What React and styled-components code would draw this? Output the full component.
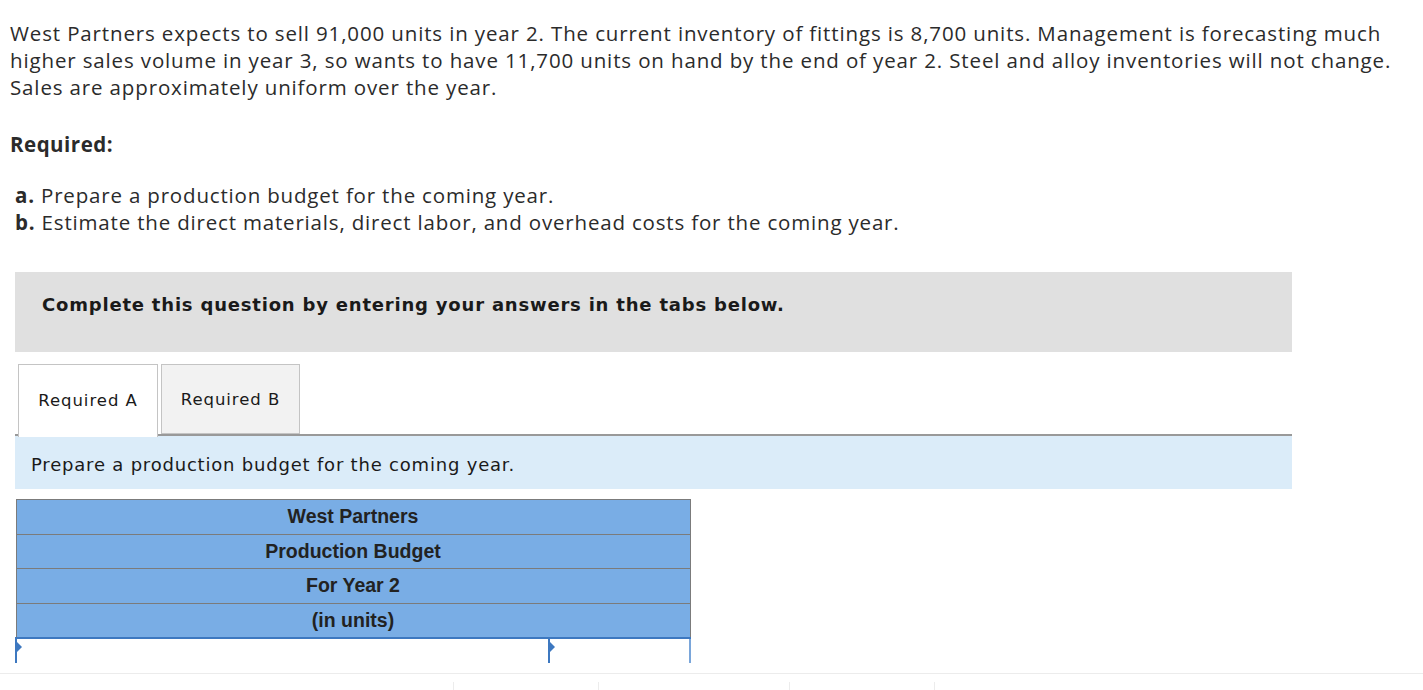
import React from 'react';
import styled, { createGlobalStyle } from 'styled-components';

const GlobalStyle = createGlobalStyle`
  html, body {
    margin: 0;
    padding: 0;
    background: #fff;
    overflow: hidden;
  }
`;

const Page = styled.div`
  padding: 20px 0 0 10px;
  width: 1413px;
  height: 690px;
  box-sizing: border-box;
  font-family: "Open Sans", Lato, sans-serif;
  color: #2b2b2b;
`;

const Intro = styled.p`
  margin: 0;
  font-size: 20.5px;
  line-height: 27px;
  white-space: nowrap;
  letter-spacing: 0.86px;
`;

const Line = styled.span`
  display: block;
`;

const Heading = styled.h3`
  margin: 30px 0 0;
  font-size: 20.5px;
  font-weight: 700;
  line-height: 27px;
  letter-spacing: 0.5px;
`;

const Tasks = styled.ol`
  list-style: none;
  margin: 24px 0 0;
  padding: 0 0 0 5px;
  font-size: 20.5px;
  line-height: 27px;
  letter-spacing: 0.82px;
  white-space: nowrap;
`;

const Letter = styled.b`
  font-weight: 700;
`;

const Work = styled.div`
  margin: 36px 0 0 5px;
  width: 1277px;
  font-family: "DejaVu Sans", Verdana, sans-serif;
  color: #1a1a1a;
`;

const Notice = styled.div`
  height: 80px;
  box-sizing: border-box;
  background: #e0e0e0;
  padding: 21px 0 0 27px;
  font-size: 18px;
  line-height: 24px;
  font-weight: 700;
  letter-spacing: 0.8px;
`;

const TabRow = styled.div`
  margin-top: 12px;
  display: flex;
  align-items: flex-start;
  gap: 3px;
  padding-left: 3px;
  border-bottom: 2px solid #999;
  height: 70px;
`;

const Tab = styled.button`
  width: ${p => p.$w}px;
  height: 70px;
  margin: 0 0 ${p => (p.$active ? -2 : 0)}px;
  padding: ${p => (p.$active ? '0 0 2px' : '0')};
  box-sizing: ${p => (p.$active ? 'content-box' : 'border-box')};
  border: 1px solid #c4c4c4;
  border-bottom: ${p => (p.$active ? 'none' : '1px solid #c4c4c4')};
  background: ${p => (p.$active ? '#fff' : '#f2f2f2')};
  font-family: "DejaVu Sans", Verdana, sans-serif;
  font-size: 16.5px;
  letter-spacing: 0.95px;
  color: #1a1a1a;
  position: relative;
  z-index: 1;
  cursor: pointer;
`;

const Instruction = styled.div`
  height: 53px;
  box-sizing: border-box;
  background: #dbecf9;
  display: flex;
  align-items: center;
  padding: 3px 0 0 16px;
  font-size: 18px;
  letter-spacing: 0.8px;
`;

const Budget = styled.table`
  margin-top: 10px;
  width: 676px;
  border-collapse: collapse;
  font-family: "Liberation Sans", Arial, sans-serif;
`;

const TitleCell = styled.td`
  height: 33.5px;
  padding: 0;
  background: #79ade5;
  border: 1px solid #7b7b7b;
  border-bottom-width: ${p => (p.$last ? 2 : 1)}px;
  border-bottom-color: ${p => (p.$last ? '#3d78c0' : '#7b7b7b')};
  text-align: center;
  font-size: 19.5px;
  font-weight: 700;
  color: #222;
`;

const InputCell = styled.td`
  height: 28px;
  padding: 0;
  position: relative;
  border-left: 2px solid #3d78c0;
  border-right: ${p => (p.$end ? '2px solid #7aa6da' : 'none')};
  border-top: 2px solid #9cc0ea;
  width: ${p => p.$w}px;
  background: #fff;
  &::before {
    content: '';
    position: absolute;
    left: 0;
    top: 3px;
    border-left: 5px solid #3d78c0;
    border-top: 5px solid transparent;
    border-bottom: 5px solid transparent;
  }
`;

const Footer = styled.div`
  position: fixed;
  left: 0;
  right: 0;
  bottom: 0;
  height: 27px;
  background: #fff;
  display: flex;
  flex-direction: column;
`;

const FooterRule = styled.div`
  margin-top: 10px;
  height: 1px;
  background: #ececec;
`;

const FooterItems = styled.div`
  flex: 1;
  display: flex;
  padding-left: 453px;
  margin-top: 8px;
`;

const FooterItem = styled.div`
  width: ${p => p.$w}px;
  border-left: 1px solid #ececec;
`;

export default function App() {
  return (
    <>
      <GlobalStyle />
      <Page>
        <Intro>
          <Line>West Partners expects to sell 91,000 units in year 2. The current inventory of fittings is 8,700 units. Management is forecasting much</Line>
          <Line>higher sales volume in year 3, so wants to have 11,700 units on hand by the end of year 2. Steel and alloy inventories will not change.</Line>
          <Line>Sales are approximately uniform over the year.</Line>
        </Intro>
        <Heading>Required:</Heading>
        <Tasks>
          <li><Letter>a.</Letter> Prepare a production budget for the coming year.</li>
          <li><Letter>b.</Letter> Estimate the direct materials, direct labor, and overhead costs for the coming year.</li>
        </Tasks>
        <Work>
          <Notice>Complete this question by entering your answers in the tabs below.</Notice>
          <TabRow>
            <Tab $active $w={138}>Required A</Tab>
            <Tab $w={139}>Required B</Tab>
          </TabRow>
          <Instruction>Prepare a production budget for the coming year.</Instruction>
          <Budget>
            <tbody>
              <tr><TitleCell colSpan={2}>West Partners</TitleCell></tr>
              <tr><TitleCell colSpan={2}>Production Budget</TitleCell></tr>
              <tr><TitleCell colSpan={2}>For Year 2</TitleCell></tr>
              <tr><TitleCell colSpan={2} $last>(in units)</TitleCell></tr>
              <tr>
                <InputCell $w={534} />
                <InputCell $w={140} $end />
              </tr>
            </tbody>
          </Budget>
        </Work>
      </Page>
      <Footer>
        <FooterRule />
        <FooterItems>
          <FooterItem $w={144} />
          <FooterItem $w={190} />
          <FooterItem $w={144} />
          <FooterItem $w={144} />
        </FooterItems>
      </Footer>
    </>
  );
}
